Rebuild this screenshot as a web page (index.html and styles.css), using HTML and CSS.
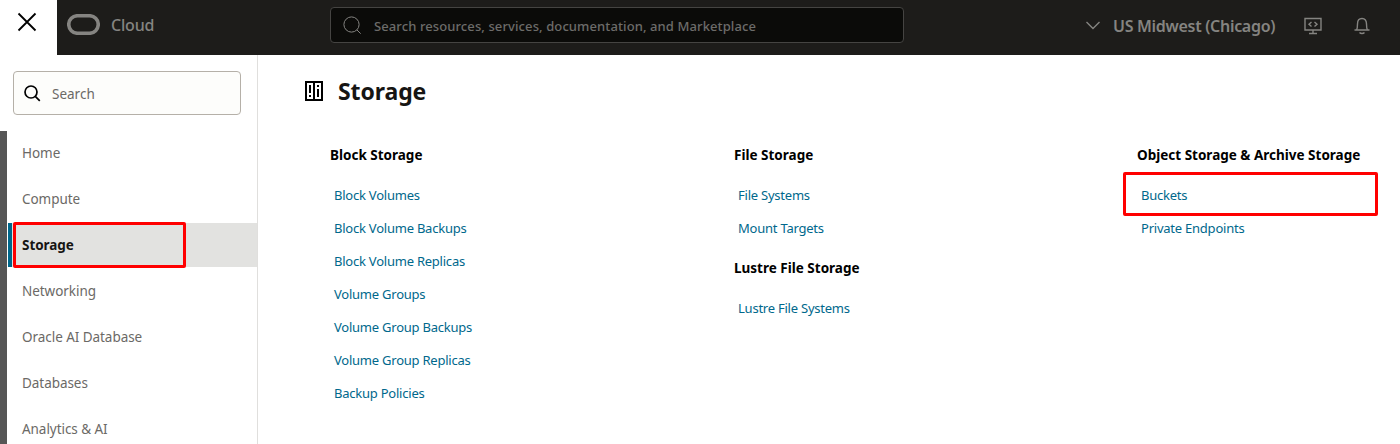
FILE: index.html
```html
<!DOCTYPE html>
<html lang="en">
<head>
<meta charset="utf-8">
<title>Storage</title>
<link rel="stylesheet" href="styles.css">
</head>
<body>
<header class="topbar">
  <button class="close" aria-label="Close menu"><svg width="20" height="20" viewBox="0 0 20 20"><path d="M1.500 1.500 18.500 18.500M18.500 1.500 1.500 18.500"/></svg></button>
  <div class="brand">
    <svg class="logo" width="33" height="21" viewBox="0 0 33 21"><rect x="1.75" y="1.75" width="29.5" height="17.5" rx="8.75"/></svg>
    <span class="brand-name"><span>Cloud</span></span>
  </div>
  <div class="global-search">
    <svg width="20" height="20" viewBox="0 0 20 20"><circle cx="8.500" cy="9.500" r="7.600"/><path d="m13.900 14.900 3.800 3.800"/></svg>
    <span>Search resources, services, documentation, and Marketplace</span>
  </div>
  <div class="region">
    <svg width="14" height="9" viewBox="0 0 14 9"><path d="m.5 1 6.500 6.500L13.500 1"/></svg>
    <span>US Midwest (Chicago)</span>
  </div>
  <svg class="tool" width="18" height="18" viewBox="0 0 18 18"><path d="M1 1.500h16v11.500H1zM9 13v3.500M5 16.500h8M7.500 5 5 7.250l2.500 2.250M10.500 5 13 7.250 10.500 9.500"/></svg>
  <svg class="tool bell" width="16" height="18" viewBox="0 0 16 18"><path d="M.5 13h15M2.500 13c.8-1.200 1-3 1-6C3.500 3.500 5 1.500 8 1.500s4.500 2 4.500 5.500c0 3 .2 4.800 1 6M5.500 15.500c1.200 1.300 3.800 1.300 5 0"/></svg>
</header>
<div class="layout">
  <aside class="sidebar">
    <div class="menu-search">
      <svg width="17" height="17" viewBox="0 0 17 17"><circle cx="7" cy="7" r="6"/><path d="m11.300 11.300 4.500 4.500"/></svg>
      <span>Search</span>
    </div>
    <nav class="menu">
      <a class="item"><span>Home</span></a>
      <a class="item"><span>Compute</span></a>
      <a class="item active"><span>Storage</span><i class="mark mark-menu"></i></a>
      <a class="item"><span>Networking</span></a>
      <a class="item"><span>Oracle AI Database</span></a>
      <a class="item"><span>Databases</span></a>
      <a class="item"><span>Analytics &amp; AI</span></a>
    </nav>
  </aside>
  <main class="content">
    <h1 class="title">
      <svg width="18" height="20" viewBox="0 0 18 20"><path fill-rule="evenodd" d="M0 0h18v20H0zM2 2v16h6V2zM10 2v16h6V2zM4 4h2v8H4zM4 14h2v2H4zM12 4h2v2h-2zM12 8h2v8h-2z"/></svg>
      <span>Storage</span>
    </h1>
    <div class="columns">
      <section class="column">
        <h2>Block Storage</h2>
        <a>Block Volumes</a>
        <a>Block Volume Backups</a>
        <a>Block Volume Replicas</a>
        <a>Volume Groups</a>
        <a>Volume Group Backups</a>
        <a>Volume Group Replicas</a>
        <a>Backup Policies</a>
      </section>
      <section class="column">
        <h2>File Storage</h2>
        <a>File Systems</a>
        <a>Mount Targets</a>
        <h2>Lustre File Storage</h2>
        <a>Lustre File Systems</a>
      </section>
      <section class="column">
        <h2>Object Storage &amp; Archive Storage</h2>
        <a>Buckets<i class="mark mark-link"></i></a>
        <a>Private Endpoints</a>
      </section>
    </div>
  </main>
</div>
</body>
</html>
```
FILE: styles.css
```css
* { box-sizing: border-box; }
body { margin: 0; height: 444px; overflow: hidden; background: #fff; font: 13px "Noto Sans", "Open Sans", sans-serif; color: #161513; }
svg { fill: none; stroke: currentColor; flex: none; display: block; }
.topbar { display: flex; align-items: center; height: 55px; background: #1d1c1a; color: #858481; }
.close { width: 57px; height: 55px; padding: 0 0 11px 17px; border: 0; background: #fff; color: #000; }
.close svg { stroke-width: 1.8; }
.brand { display: flex; align-items: center; gap: 11px; width: 273px; padding: 0 0 6px 10px; }
.logo { stroke-width: 3.6; }
.brand-name { font-size: 16px; font-weight: 500; line-height: 20px; letter-spacing: -.2px; }
.global-search { display: flex; align-items: center; gap: 11px; width: 574px; height: 36px; margin-bottom: 5px; padding-left: 12px; border: 1px solid #454442; border-radius: 4px; background: #0b0b09; font-size: 13px; font-weight: 500; letter-spacing: .1px; color: #6d6c6a; white-space: nowrap; }
.global-search span { padding-top: 2px; }
.global-search svg { color: #858481; }
.region { display: flex; align-items: center; gap: 13px; margin: 0 28px 4px 182px; width: 190px; font-size: 16px; font-weight: 600; letter-spacing: -.3px; white-space: nowrap; }
.region svg { stroke-width: 1.4; }
.tool { margin: 0 32px 4px 0; stroke-width: 1.4; }
.bell { margin-right: 0; }
.layout { display: flex; height: 389px; }
.sidebar { width: 258px; border-right: 1px solid #e0dfdd; flex: none; }
.menu-search { display: flex; align-items: center; gap: 11px; width: 228px; height: 44px; margin: 16px 0 16px 13px; padding: 1px 0 0 10px; border: 1px solid #b5b0a8; border-radius: 4px; background: #fdfdfb; color: #6b6966; font-size: 13.500px; }
.menu-search svg { color: #000; stroke-width: 1.7; }
.menu-search span { padding-top: 1px; }
.menu { display: flex; flex-direction: column; gap: 2px; border-left: 7px solid #565656; padding-left: 1px; }
.item { position: relative; display: flex; align-items: center; height: 44px; padding-left: 10px; border-left: 4px solid transparent; color: #6b6966; font-size: 13.500px; letter-spacing: -.05px; flex: none; }
.active { background: #e2e2e0; background-clip: padding-box; border-left-color: #00688c; color: #161513; font-weight: 700; }
.mark { position: absolute; border: 3px solid #f00; border-radius: 2px; }
.mark-menu { left: 1px; top: -1px; width: 173px; height: 46px; }
.mark-link { left: -18px; top: -8px; width: 255px; height: 44px; }
.content { flex: 1; padding: 22px 0 0 47px; }
.title { display: flex; align-items: center; gap: 15px; height: 28px; margin: 0; font-size: 23px; font-weight: 700; line-height: 28px; letter-spacing: -.1px; }
.title svg { fill: #000; stroke: none; }
.columns { display: grid; grid-template-columns: 404px 403px 1fr; padding: 34px 0 0 25px; }
.column { display: flex; flex-direction: column; align-items: flex-start; }
.column h2 { height: 32px; margin: 0; font-size: 13.500px; font-weight: 700; line-height: 32px; color: #000; }
.column h2 + a { margin-top: 9px; }
.column a { position: relative; margin: 0 0 3px 4px; height: 30px; line-height: 30px; color: #00688c; letter-spacing: -.23px; }
.column a + h2 { margin-top: 6px; }
```
